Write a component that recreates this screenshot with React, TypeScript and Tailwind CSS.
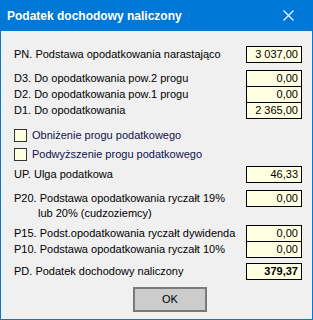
import React from 'react';

const Box: React.FC<{ value: string; bold?: boolean }> = ({ value, bold }) => (
  <div
    className={
      'w-[56px] h-[17px] shrink-0 border border-black bg-[#ffffe1] flex items-center justify-end pr-[3px] text-[11px] leading-none ' +
      (bold ? 'font-bold' : '')
    }
  >
    {value}
  </div>
);

const Row: React.FC<{ label: string; value: string; bold?: boolean; className?: string }> = ({
  label,
  value,
  bold,
  className,
}) => (
  <div className={'flex items-center justify-between h-[17px] ' + (className ?? '')}>
    <span className="text-[11px] leading-none">{label}</span>
    <Box value={value} bold={bold} />
  </div>
);

const Check: React.FC<{ label: string }> = ({ label }) => (
  <label className="flex items-center h-[19px] gap-[5px]">
    <span className="w-[13px] h-[13px] border border-[#333333] bg-[#ffffe1]" />
    <span className="text-[11px] leading-none text-[#10104a]">{label}</span>
  </label>
);

const App: React.FC = () => {
  return (
    <div
      className="w-[313px] h-[320px] bg-[#f0f0f0] border-x border-b border-[#0078d7] flex flex-col text-black"
      style={{ fontFamily: '"Liberation Sans", Arial, sans-serif' }}
    >
      <div className="h-[31px] bg-[#0078d7] flex items-center justify-between pl-[6px] pr-[18px] shrink-0">
        <span className="text-white font-bold text-[12px]">Podatek dochodowy naliczony</span>
        <svg width="11" height="11" viewBox="0 0 11 11" className="text-white">
          <path d="M0.5 0.5 L10.5 10.5 M10.5 0.5 L0.5 10.5" stroke="currentColor" strokeWidth="1.1" />
        </svg>
      </div>

      <div className="flex flex-col pl-[13px] pr-[10px] pb-[7px]">
        <Row className="mt-[15px]" label="PN. Podstawa opodatkowania narastająco" value="3 037,00" />

        <Row className="mt-[7px]" label="D3. Do opodatkowania pow.2 progu" value="0,00" />
        <Row className="-mt-px" label="D2. Do opodatkowania pow.1 progu" value="0,00" />
        <Row className="-mt-px" label="D1. Do opodatkowania" value="2 365,00" />

        <div className="mt-[7px] flex flex-col">
          <Check label="Obniżenie progu podatkowego" />
          <Check label="Podwyższenie progu podatkowego" />
        </div>

        <Row className="mt-[2px]" label="UP. Ulga podatkowa" value="46,33" />

        <div className="mt-[7px] h-[35px] flex justify-between items-start">
          <div className="text-[11px] leading-[15px] pt-[1px]">
            <div>P20. Podstawa opodatkowania ryczałt 19%</div>
            <div className="pl-[24px]">lub 20% (cudzoziemcy)</div>
          </div>
          <Box value="0,00" />
        </div>

        <Row label="P15. Podst.opodatkowania ryczałt dywidenda" value="0,00" />
        <Row className="-mt-px" label="P10. Podstawa opodatkowania ryczałt 10%" value="0,00" />

        <Row className="mt-[5px]" label="PD. Podatek dochodowy naliczony" value="379,37" bold />

        <div className="mt-[7px] flex">
          <button className="ml-[119px] w-[74px] h-[25px] bg-[#cccccc] border-2 border-[#7a7a7a] text-[11px]">
            OK
          </button>
        </div>
      </div>
    </div>
  );
};

export default App;
